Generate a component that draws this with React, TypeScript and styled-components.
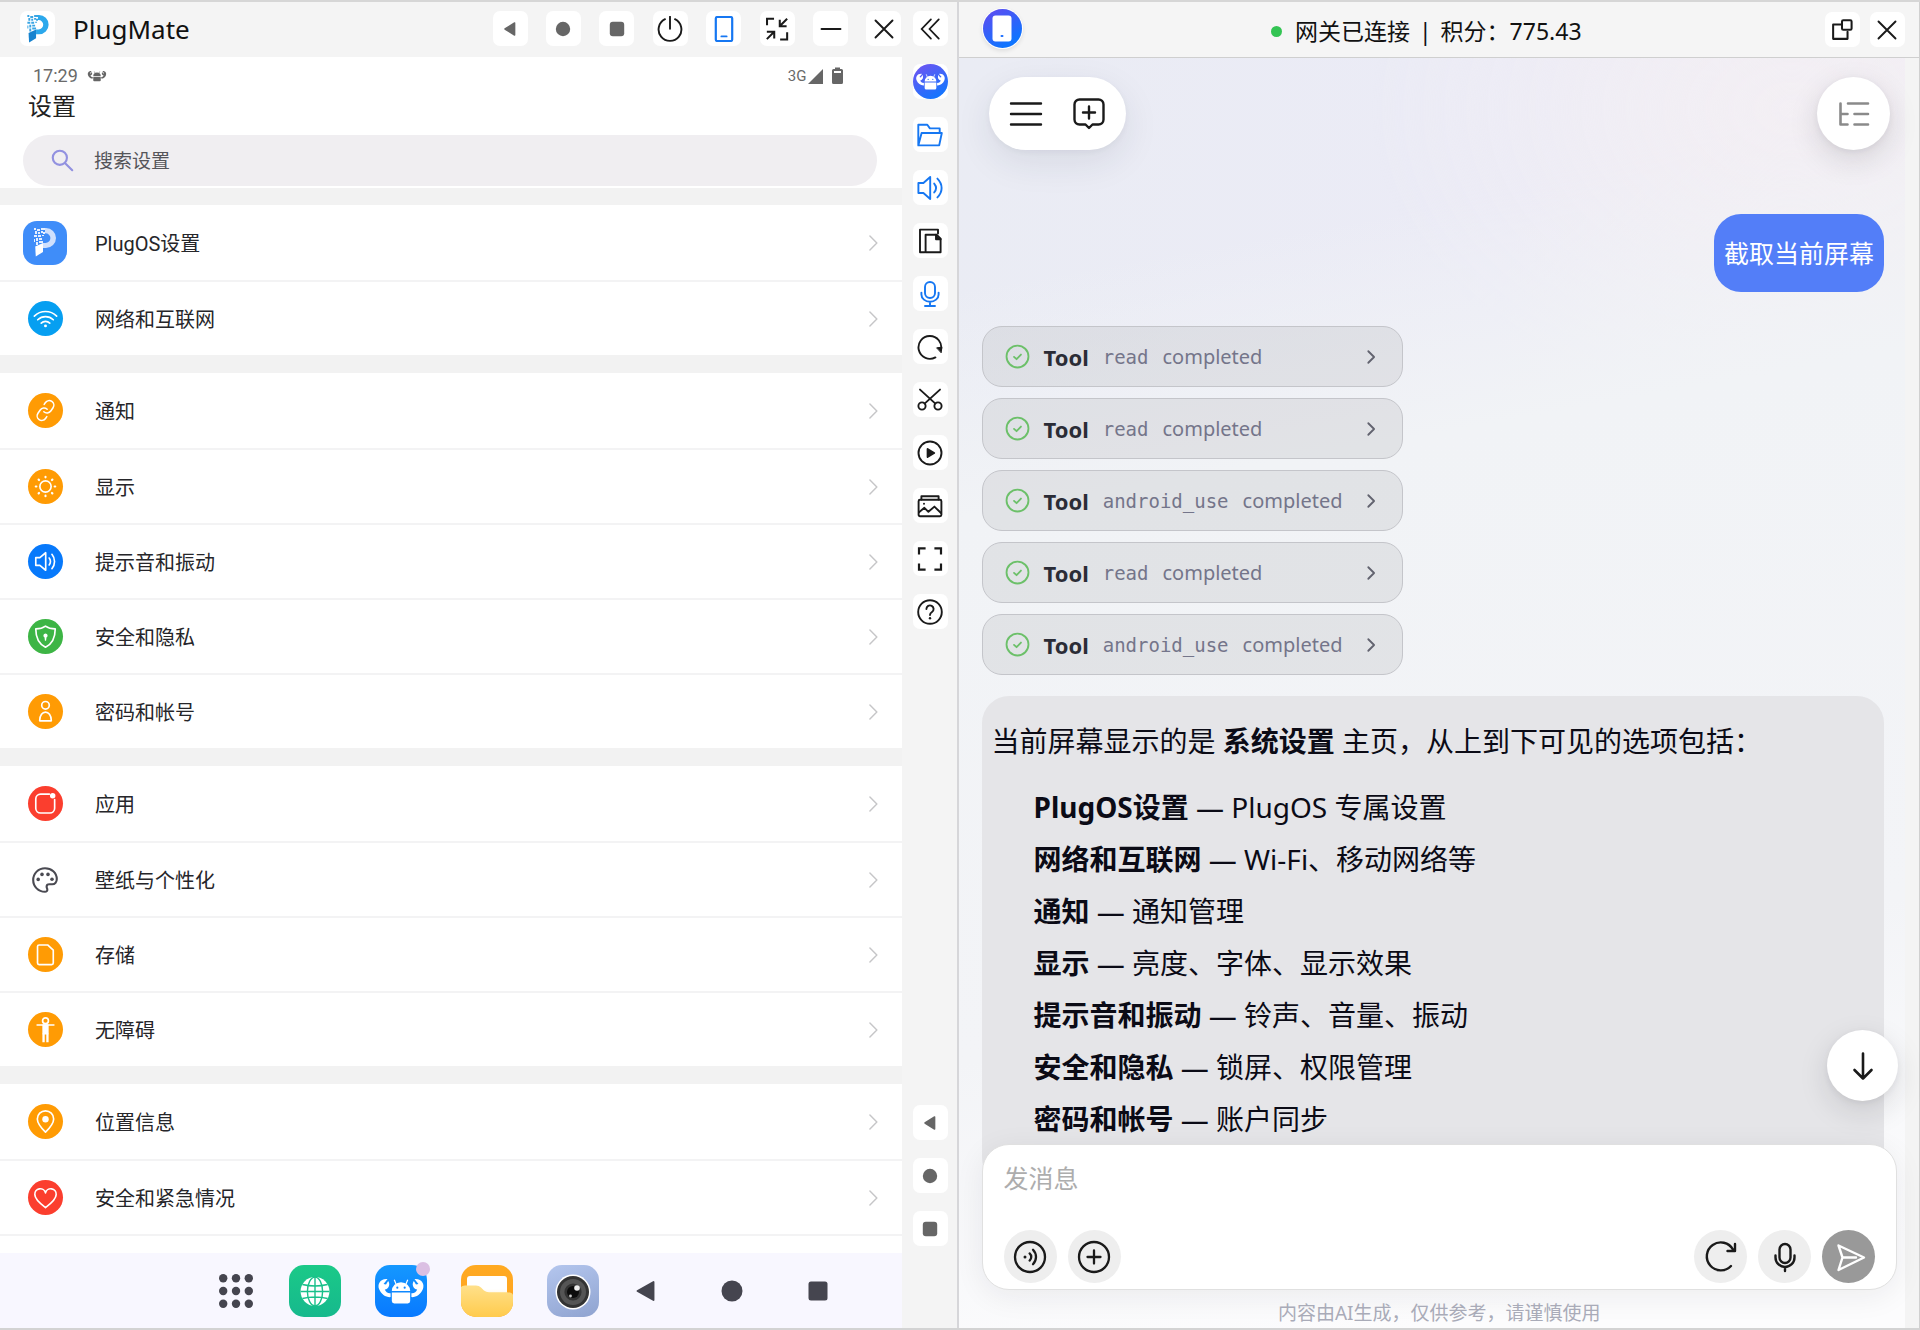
import React from "react";
import styled, { createGlobalStyle } from "styled-components";

const cjk = `"Noto Sans CJK SC", sans-serif`;
const desktopFont = `"Noto Sans", ${cjk}`;
const phoneFont = `Roboto, ${cjk}`;

const blue = "#1677f2";
const ink = "#1a1a1a";

const GlobalStyle = createGlobalStyle`
  *, *::before, *::after { box-sizing: border-box; }
  body { margin: 0; font-family: ${desktopFont}; color: ${ink}; background: #f4f4f4; }
  button, input, textarea { font: inherit; color: inherit; border: 0; margin: 0; padding: 0; background: none; }
  h1, p, ul { margin: 0; padding: 0; font-weight: 400; }
  ul { list-style: none; }
  svg { display: block; flex: none; }
`;

/* ---------- glyphs ---------- */

type GlyphProps = { size?: number; color?: string; children: React.ReactNode; box?: number; weight?: number };

const Glyph = ({ size = 26, color = ink, box = 26, weight = 1.9, children }: GlyphProps) => (
  <svg width={size} height={size} viewBox={`0 0 ${box} ${box}`} fill="none" stroke={color}
    strokeWidth={weight} strokeLinecap="round" strokeLinejoin="round" aria-hidden="true">
    {children}
  </svg>
);

const claw = "M9.2 10.2C4.6 9.6 2.2 13.6 3.8 17C5 20 8 22.2 11.2 22V19.4C9.4 19.6 8 18.6 7.4 17C10 16.6 11.2 13.6 9.6 11.4L8.2 13.8L6.6 13.4Z";

const Lobster = ({ fill = "#fff", eye = "#2a6cf8" }: { fill?: string; eye?: string }) => (
  <g stroke="none" fill={fill}>
    <path d="M12 18a6 5.8 0 0 1 12 0z" />
    <path d="M12 19h12v5.6a1.6 1.6 0 0 1-1.6 1.6h-8.800a1.600 1.600 0 0 1-1.600-1.600z" />
    <path d="M14.800 13.600L13.600 10.600M21.200 13.600L22.400 10.600" stroke={fill} strokeWidth="0.800" />
    <path d={claw} />
    <path d={claw} transform="translate(36 0) scale(-1 1)" />
    <circle cx="15.600" cy="15.800" r="0.700" fill={eye} />
    <circle cx="20.400" cy="15.800" r="0.700" fill={eye} />
  </g>
);

const PMark = ({ bowl, stem, dots }: { bowl: string; stem: string; dots: string }) => (
  <g stroke="none">
    <path d="M11 0h1a10 10 0 0 1 0 20H9v-5h2.500a4.900 4.900 0 0 0 0-9.800H11z" fill={bowl} />
    <path d="M1.200 18.600L9 15v9L1.800 28.400z" fill={stem} />
    <path d="M0 0h2v2H0zM3 1h3v2H3zM7 0h4v2H7zM1 3h2v3H1zM4 4h2v2H4zM7 3h2v2H7zM9 4h2v2H9zM0 7h3v2H0zM4 7h3v2H4zM8 7h2v1H8zM2 10h2v3H2zM5 10h3v2H5zM0 11h1v3H0zM5 13h2v2H5zM2 14h2v3H2zM7 13h2v2H7z" fill={dots} />
  </g>
);

const shapes = {
  back: <path d="M17.600 7v12L8 13z" fill="#666" stroke="#666" strokeWidth="1.500" />,
  home: <circle cx="13" cy="13" r="7.200" fill="#666" stroke="none" />,
  recent: <rect x="5.800" y="5.800" width="14.400" height="14.400" rx="3" fill="#666" stroke="none" />,
  power: <><path d="M8 3.200a11.400 11.400 0 1 0 10 0" /><path d="M13 .8v12" /></>,
  phone: <><rect x="4.800" y="1" width="16.400" height="24" rx="1.600" strokeWidth="2.200" /><path d="M10.400 20.400h5.200" /></>,
  shrink: <path d="M2.200 9V2h7.600M16 3v7h7.400M24 1.800l-7.600 7.600M2 16h8v7.400M9.400 16.600L2 24M16.400 24.400h7.600v-7.800" strokeLinecap="butt" strokeLinejoin="miter" strokeWidth="2.200" />,
  minus: <path d="M3.500 13h19" />,
  close: <path d="M4.500 4.500l17 17M21.500 4.500l-17 17" />,
  fold: <path d="M14 2.500L4 13l10 10.500M22.500 2.500L12.500 13l10 10.500" strokeLinejoin="miter" />,
  folder: <path d="M1.300 23V2.800h9l2.600 3.600h9.800v4.200M1.300 23.400L4.600 11h20.200l-2.600 12.400z" />,
  volume: <path d="M1.400 8h5l6.800-6v22l-6.800-6h-5zM17.200 8.600c2.200 2.600 2.200 6.200 0 8.800M20.400 3.600c5.600 5.600 5.600 13.200 0 18.800" />,
  copy: <><path d="M7.600 24.200H3V1.600h18v4" /><path d="M8.600 6.800h11.200l3.800 3.800v13.600h-15z" /><path d="M19 6.800v4.400h4.600" fill={ink} /></>,
  mic: <><rect x="8" y="1" width="10" height="16" rx="5" /><path d="M4.400 11.600v1.800a8.600 7.400 0 0 0 17.200 0v-1.800M13 21v4M8 25h10" /></>,
  rotate: <><path d="M18.400 23.400A11.400 11.400 0 1 1 24 16" /><path d="M20 13.800l4.800-.6-.6 5.200z" fill={ink} strokeWidth="1" /></>,
  cut: <><circle cx="5" cy="19" r="3.600" /><circle cx="21" cy="19" r="3.600" /><path d="M3 2.600L18.400 16.600M23 2.600L7.600 16.600" /></>,
  play: <><circle cx="13" cy="13" r="11.500" /><path d="M10.600 9l6.600 4-6.600 4z" fill={ink} /></>,
  gallery: <><path d="M4.400 6.600v-3.400h17.200v3.400" /><rect x="1.600" y="6.800" width="22.800" height="16.400" rx="1.400" /><path d="M2 19.200l5.400-4.400 4 4 6-5.200 6.600 6.400" /><circle cx="7" cy="10.800" r="1" fill={ink} stroke="none" /></>,
  full: <path d="M2 8.600V2.400h6.600M17.400 2.400H24v6.200M24 17.400v6.200h-6.600M8.600 23.600H2v-6.200" strokeLinecap="butt" strokeLinejoin="miter" strokeWidth="2.200" />,
  help: <><circle cx="13" cy="13" r="11.800" /><path d="M9.400 10a3.600 3.600 0 1 1 5.600 3c-1.400.9-2 1.500-2 3" /><circle cx="13" cy="19.200" r="1.200" fill={ink} stroke="none" /></>,
  popout: <><path d="M11.600 7H3.400v15.600H19V15" strokeWidth="2.200" /><rect x="13" y="2.400" width="10.400" height="10.400" rx="1.400" strokeWidth="2.200" /></>,
};
type ShapeName = keyof typeof shapes;

const chevron = <path d="M9 4l9 9-9 9" />;

/* ---------- frame ---------- */

const Desktop = styled.main`
  display: flex;
  height: 100vh;
  border-top: 2px solid #d6d6d6;
  border-bottom: 2px solid #d3d3d3;
`;

const PhoneWindow = styled.section`
  flex: 958 1 0;
  min-width: 0;
  display: grid;
  grid-template-columns: 1fr 55px;
  border-right: 1px solid #d6d6d9;
`;

const PhoneColumn = styled.div`
  min-width: 0;
  min-height: 0;
  display: flex;
  flex-direction: column;
`;

const TitleBar = styled.header`
  flex: none;
  height: 55px;
  display: flex;
  align-items: center;
  padding: 0 0 2px 20px;
`;

const AppName = styled.h1`
  margin-left: 18px;
  font-size: 26px;
  line-height: 34px;
  color: #111;
`;

const WindowTools = styled.div`
  width: 409px;
  margin-left: auto;
  display: flex;
  justify-content: space-between;
`;

const Tile = styled.button`
  flex: none;
  width: 35px;
  height: 35px;
  display: grid;
  place-items: center;
  border-radius: 7px;
  background: #fff;
`;

const SideBar = styled.nav`
  display: flex;
  flex-direction: column;
  align-items: center;
  gap: 18px;
  padding: 9px 0 82px 2px;
`;

const Spacer = styled.span`
  flex: 1;
`;

const ToolTile = ({ icon, label, active, size = 26 }: { icon: ShapeName; label: string; active?: boolean; size?: number }) => (
  <Tile type="button" aria-label={label}>
    <Glyph size={size} color={active ? blue : ink}>{shapes[icon]}</Glyph>
  </Tile>
);

/* ---------- phone screen ---------- */

const Screen = styled.div`
  flex: 1;
  min-height: 0;
  display: flex;
  flex-direction: column;
  background: #fff;
  font-family: ${phoneFont};
`;

const StatusBar = styled.div`
  display: flex;
  align-items: center;
  gap: 9px;
  height: 36px;
  padding: 2px 59px 0 33px;
  font-size: 18px;
  line-height: 22px;
  color: #6a6a6a;
`;

const Signal = styled.span`
  margin-left: auto;
  display: flex;
  align-items: center;
  font-size: 15px;
`;

const PageTitle = styled.h1`
  padding-left: 28px;
  font-size: 24px;
  line-height: 28px;
  color: #222;
`;

const SearchBox = styled.label`
  flex: none;
  height: 51px;
  margin: 14px 25px 2px 23px;
  padding: 0 28px;
  display: flex;
  align-items: center;
  gap: 20px;
  border-radius: 26px;
  background: #f0eef1;
`;

const SearchInput = styled.input`
  flex: 1;
  padding-top: 3px;
  font-size: 19px;
  line-height: 28px;
  outline: 0;
  &::placeholder { color: #55555a; opacity: 1; }
`;

const Groups = styled.div`
  flex: 1;
  min-height: 0;
  overflow: hidden;
  display: flex;
  flex-direction: column;
  gap: 18px;
  padding-top: 17px;
  background: #f2f2f2;
`;

const Group = styled.ul`
  flex: none;
  background: #fff;
  &:last-child { flex: 1 0 auto; }
`;

const Item = styled.li`
  height: 75px;
  & + & { border-top: 2px solid #f3f3f4; }
  ${Group}:last-child &:last-child { height: 77px; border-bottom: 2px solid #f3f3f4; }
`;

const Row = styled.button`
  width: 100%;
  height: 100%;
  padding: 0 19px 0 23px;
  display: grid;
  grid-template-columns: 44px 1fr auto;
  align-items: center;
  column-gap: 28px;
  text-align: left;
  font-size: 20px;
  line-height: 28px;
  color: #26262a;
`;

const RowLabel = styled.span`
  padding-top: 2px;
`;

const Badge = styled.span<{ $color: string }>`
  justify-self: center;
  width: 35px;
  height: 35px;
  display: grid;
  place-items: center;
  border-radius: 50%;
  background: ${(p) => p.$color};
`;

const SquareBadge = styled(Badge)`
  width: 44px;
  height: 44px;
  border-radius: 14px;
`;

const orange = "#ff9b04";
const red = "#fb3e2e";

const badges: Record<string, [string, React.ReactNode]> = {
  wifi: ["#069ff1", <><path d="M6.500 15.500a16.500 16.500 0 0 1 23 0M10 19.300a11.500 11.500 0 0 1 16 0M13.600 22.800a6.300 6.300 0 0 1 8.800 0" /><circle cx="18" cy="25.600" r="1.500" fill="#fff" stroke="none" /></>],
  link: [orange, <g transform="rotate(-10 18 18) translate(6.600 6.600) scale(.95)"><path d="M10 13a5 5 0 0 0 7.540.540l3-3a5 5 0 0 0-7.070-7.070l-1.720 1.710" /><path d="M14 11a5 5 0 0 0-7.540-.540l-3 3a5 5 0 0 0 7.070 7.070l1.710-1.710" /></g>],
  sun: [orange, <><circle cx="18" cy="18" r="5.800" />{[0, 45, 90, 135, 180, 225, 270, 315].map((a) => <path key={a} d="M18 8.600v-.6" strokeWidth="2.200" transform={`rotate(${a} 18 18)`} />)}</>],
  sound: ["#0779fb", <path d="M8 14h4.200l6-5v18l-6-5H8zM21.800 14.400c1.600 2.200 1.600 5 0 7.200M24.600 10.600c3.600 4.400 3.600 10.400 0 14.800" />],
  shield: ["#3db545", <><path d="M18 7.400c3 2.200 6.600 2.800 10 2.800 0 8-2.400 15-10 18.800C10.400 25.200 8 18.200 8 10.200c3.400 0 7-.6 10-2.800z" /><path d="M18 14.800a2.300 2.300 0 0 1 1 4.300l-.4 3.300h-1.200l-.4-3.300a2.300 2.300 0 0 1 1-4.300z" fill="#fff" stroke="none" /></>],
  person: [orange, <><circle cx="18" cy="11.600" r="3.900" /><path d="M12 27.600c0-12 12-12 12 0z" /></>],
  apps: [red, <><path d="M22 8.400H13a5 5 0 0 0-5 5v9.400a5 5 0 0 0 5 5h9.400a5 5 0 0 0 5-5V14" /><circle cx="25.400" cy="10" r="2.800" fill="#fff" stroke="none" /></>],
  storage: [orange, <path d="M11.400 8.200h8.800l5.800 5.400v13.200a1.600 1.600 0 0 1-1.600 1.600h-13a1.600 1.600 0 0 1-1.600-1.600v-17a1.600 1.600 0 0 1 1.600-1.600z" />],
  access: [orange, <><circle cx="18" cy="9" r="3" /><path d="M9.400 13.400h17.200" /><path d="M15.600 13.400h4.800v9h-4.800z" fill="#fff" /><path d="M16 22v9M20 22v9" strokeWidth="2.400" strokeLinecap="butt" /></>],
  pin: [orange, <><path d="M18 29c-5-5-8.400-9.400-8.400-13.600a8.400 8.400 0 0 1 16.800 0c0 4.200-3.400 8.600-8.400 13.600z" /><circle cx="18" cy="15.600" r="3.300" fill="#fff" stroke="none" /></>],
  heart: [red, <path d="M18 28.400C12 24 7 19.800 7 15a5.600 5.600 0 0 1 11-1.800A5.600 5.600 0 0 1 29 15c0 4.800-5 9-11 13.400z" />],
};

const RowBadge = ({ name }: { name: string }) => {
  if (name === "plug")
    return (
      <SquareBadge $color="#3f8df9">
        <svg width="22" height="29" viewBox="0 0 22 29" aria-hidden="true"><PMark bowl="#cfe0fd" stem="#fff" dots="#e6f0ff" /></svg>
      </SquareBadge>
    );
  if (name === "palette")
    return (
      <Badge $color="transparent">
        <Glyph size={26} color="#4a4a52" weight={2.100}>
          <path d="M13 1.200C6.400 1.200 1.200 6.400 1.200 13S6.400 24.800 13 24.800c1.600 0 2.500-1.100 2.300-2.500-.2-1-.7-1.700-.7-2.600 0-1.600 1.200-2.400 2.800-2.400h2.800c2.800 0 4.600-2.200 4.600-5.200C24.800 5.600 19.400 1.200 13 1.200z" />
          {[[6.2, 12.4], [10, 7.4], [16, 7.4], [20, 12.2]].map(([x, y]) => <circle key={x} cx={x} cy={y} r="1.800" fill="#4a4a52" stroke="none" />)}
        </Glyph>
      </Badge>
    );
  const [color, art] = badges[name];
  return <Badge $color={color}><Glyph size={35} box={36} color="#fff" weight={1.700}>{art}</Glyph></Badge>;
};

const settings: [string, string][][] = [
  [["plug", "PlugOS设置"], ["wifi", "网络和互联网"]],
  [["link", "通知"], ["sun", "显示"], ["sound", "提示音和振动"], ["shield", "安全和隐私"], ["person", "密码和帐号"]],
  [["apps", "应用"], ["palette", "壁纸与个性化"], ["storage", "存储"], ["access", "无障碍"]],
  [["pin", "位置信息"], ["heart", "安全和紧急情况"]],
];

const Dock = styled.nav`
  flex: none;
  height: 75px;
  display: flex;
  align-items: center;
  justify-content: center;
  gap: 34px;
  padding-left: 146px;
  background: #f8f7ff;
`;

const DockButton = styled.button<{ $fill?: string }>`
  position: relative;
  height: 52px;
  display: grid;
  place-items: center;
  border-radius: 15px;
  background: ${(p) => p.$fill ?? "none"};
`;

const AppDrawerButton = styled(DockButton)`
  width: 38px;
`;

const UnreadDot = styled.span`
  position: absolute;
  top: -3px;
  right: -3px;
  width: 14px;
  height: 14px;
  border-radius: 50%;
  background: #dbbfe3;
`;

const NavKeys = styled.div`
  display: flex;
  gap: 60px;
`;

const dark = "#45454f";

const PhoneDock = () => (
  <Dock aria-label="导航栏">
    <AppDrawerButton type="button" aria-label="全部应用">
      <svg width="34" height="34" viewBox="0 0 34 34" fill={dark} aria-hidden="true">
        {[4.2, 17, 29.8].map((y) => [4.2, 17, 29.8].map((x) => <circle key={`${x}-${y}`} cx={x} cy={y} r="4.200" />))}
      </svg>
    </AppDrawerButton>
    <DockButton type="button" aria-label="浏览器" $fill="linear-gradient(#1bc988, #16b98d)">
      <svg width="52" height="52" viewBox="0 0 52 52" aria-hidden="true">
        <circle cx="26" cy="26.500" r="14.400" fill="#fff" />
        <g fill="none" stroke="#19c08a" strokeWidth="1.400">
          <ellipse cx="26" cy="26.500" rx="7.600" ry="14.400" />
          <path d="M26 12v29M11.600 26.500h28.800M13.400 19.500q12.600 3 25.200 0M13.400 33.500q12.600-3 25.200 0" />
        </g>
      </svg>
    </DockButton>
    <DockButton type="button" aria-label="助手" $fill="linear-gradient(#1598ff, #0879ff)">
      <svg width="52" height="52" viewBox="1 1 34 34" aria-hidden="true"><Lobster eye="#0f86ff" /></svg>
      <UnreadDot />
    </DockButton>
    <DockButton type="button" aria-label="文件" $fill="linear-gradient(#ffaa22, #ffa220)">
      <svg width="52" height="52" viewBox="0 0 52 52" aria-hidden="true">
        <defs>
          <linearGradient id="folderPaper" x1="0" y1="0" x2="0" y2="1"><stop offset="0.500" stopColor="#fff" /><stop offset="1" stopColor="#ffe9bd" /></linearGradient>
          <linearGradient id="folderFront" x1="0" y1="0" x2="0" y2="1"><stop offset="0" stopColor="#ffe08a" /><stop offset="1" stopColor="#ffcb4d" /></linearGradient>
        </defs>
        <rect x="6" y="11" width="40" height="26" rx="3" fill="url(#folderPaper)" />
        <path d="M0 22q1-1.500 4-1.500h11q3 0 5 2l3 3q2 1.800 5 1.800h18q5 0 6 2.700v7A15 15 0 0 1 37 52H15A15 15 0 0 1 0 37z" fill="url(#folderFront)" />
      </svg>
    </DockButton>
    <DockButton type="button" aria-label="相机" $fill="linear-gradient(160deg, #b4c6ee, #8fa3d0)">
      <svg width="52" height="52" viewBox="0 0 52 52" aria-hidden="true">
        <circle cx="26" cy="27" r="17.500" fill="#fff" />
        <circle cx="26" cy="27" r="16" fill="#333" />
        <circle cx="26" cy="27" r="13" fill="#555" />
        <circle cx="26" cy="27" r="8.600" fill="#333" />
        <circle cx="26" cy="27" r="6" fill="#0c0c0c" />
        <circle cx="30" cy="23" r="2.800" fill="#eee" />
        <circle cx="23.500" cy="31" r="1.400" fill="#ccc" />
      </svg>
    </DockButton>
    <NavKeys>
      <DockButton type="button" aria-label="返回">
        <Glyph size={26} color={dark}><path d="M20.500 4v18L4.500 13z" fill={dark} /></Glyph>
      </DockButton>
      <DockButton type="button" aria-label="主页">
        <Glyph size={26}><circle cx="13" cy="13" r="10.500" fill={dark} stroke="none" /></Glyph>
      </DockButton>
      <DockButton type="button" aria-label="最近任务">
        <Glyph size={26}><rect x="3.500" y="3.500" width="19" height="19" rx="2.500" fill={dark} stroke="none" /></Glyph>
      </DockButton>
    </NavKeys>
  </Dock>
);

const PhonePanel = () => (
  <PhoneWindow aria-label="PlugMate">
    <PhoneColumn>
      <TitleBar>
        <Tile as="span">
          <svg width="22" height="28" viewBox="0 0 22 29" aria-hidden="true"><PMark bowl="#2ba8ec" stem="#1783cf" dots="#39a5e4" /></svg>
        </Tile>
        <AppName>PlugMate</AppName>
        <WindowTools>
          <ToolTile icon="back" label="返回" />
          <ToolTile icon="home" label="主页" />
          <ToolTile icon="recent" label="最近" />
          <ToolTile icon="power" label="电源" />
          <ToolTile icon="phone" label="竖屏" active />
          <ToolTile icon="shrink" label="还原" size={24} />
          <ToolTile icon="minus" label="最小化" />
          <ToolTile icon="close" label="关闭" />
        </WindowTools>
      </TitleBar>
      <Screen>
        <StatusBar>
          <span>17:29</span>
          <svg width="20" height="20" viewBox="2 2 32 32" aria-hidden="true"><Lobster fill="#666" eye="#666" /></svg>
          <Signal>
            3G
            <svg width="25" height="18" viewBox="0 0 25 18" aria-hidden="true"><path d="M1 17L16 2v15z" fill="#666" /></svg>
            <svg width="11" height="18" viewBox="0 0 11 18" aria-hidden="true"><path d="M3 2V.5h5V2h1.500A1.500 1.500 0 0 1 11 3.500v12a1.500 1.500 0 0 1-1.500 1.500h-8A1.500 1.500 0 0 1 0 15.500v-12A1.500 1.500 0 0 1 1.500 2zM2 4v2h7V4z" fill="#666" fillRule="evenodd" /></svg>
          </Signal>
        </StatusBar>
        <PageTitle>设置</PageTitle>
        <SearchBox>
          <Glyph size={23} color="#9291e0" weight={2.400}><circle cx="10" cy="10" r="8" /><path d="M16 16l8 8" /></Glyph>
          <SearchInput type="text" placeholder="搜索设置" aria-label="搜索设置" />
        </SearchBox>
        <Groups>
          {settings.map((group, g) => (
            <Group key={g}>
              {group.map(([icon, label]) => (
                <Item key={label}>
                  <Row type="button">
                    <RowBadge name={icon} />
                    <RowLabel>{label}</RowLabel>
                    <Glyph size={20} color="#c6c6c8" weight={1.900}>{chevron}</Glyph>
                  </Row>
                </Item>
              ))}
            </Group>
          ))}
        </Groups>
        <PhoneDock />
      </Screen>
    </PhoneColumn>
    <SideBar aria-label="工具">
      <ToolTile icon="fold" label="收起" size={24} />
      <Tile type="button" aria-label="助手">
        <svg width="35" height="35" viewBox="0 0 36 36" aria-hidden="true">
          <defs><linearGradient id="agent" x1="0.200" y1="0" x2="0.800" y2="1"><stop offset="0" stopColor="#6d55f2" /><stop offset="1" stopColor="#0c78ff" /></linearGradient></defs>
          <circle cx="18" cy="18" r="18" fill="url(#agent)" />
          <Lobster />
        </svg>
      </Tile>
      <ToolTile icon="folder" label="文件" active />
      <ToolTile icon="volume" label="声音" active />
      <ToolTile icon="copy" label="剪贴板" />
      <ToolTile icon="mic" label="麦克风" active />
      <ToolTile icon="rotate" label="旋转" />
      <ToolTile icon="cut" label="截图" />
      <ToolTile icon="play" label="录屏" />
      <ToolTile icon="gallery" label="相册" />
      <ToolTile icon="full" label="全屏" />
      <ToolTile icon="help" label="帮助" />
      <Spacer />
      <ToolTile icon="back" label="返回" />
      <ToolTile icon="home" label="主页" />
      <ToolTile icon="recent" label="最近" />
    </SideBar>
  </PhoneWindow>
);

/* ---------- chat ---------- */

const ChatWindow = styled.section`
  flex: 962 1 0;
  min-width: 0;
  display: flex;
  flex-direction: column;
  border-left: 1px solid #d6d6d9;
  border-right: 1px solid #d0d0d0;
`;

const ChatBar = styled.header`
  flex: none;
  height: 56px;
  display: flex;
  justify-content: space-between;
  align-items: center;
  padding: 0 14px 0 24px;
  border-bottom: 1px solid #cfcfcf;
  background: #f5f5f5;
`;

const ChatLogo = styled.span`
  width: 39px;
  height: 39px;
  margin-bottom: 3px;
  display: grid;
  place-items: center;
  border-radius: 50%;
  background: linear-gradient(150deg, #6548f0, #0f74ff 80%);
  box-shadow: 0 0 0 1px #fff, 0 2px 4px 1px #00000018;
`;

const ConnectionState = styled.p`
  display: flex;
  align-items: center;
  gap: 9px;
  padding: 3px 0 0 6px;
  font-size: 23px;
  line-height: 34px;
  color: #111;
`;

const OnlineDot = styled.i`
  width: 11px;
  height: 11px;
  margin-right: 4px;
  border-radius: 50%;
  background: #33c453;
`;

const BarActions = styled.div`
  display: flex;
  justify-content: flex-end;
  gap: 10px;
`;

const ChatBody = styled.div`
  position: relative;
  flex: 1;
  min-height: 0;
  margin-right: 14px;
  display: flex;
  flex-direction: column;
  background:
    radial-gradient(ellipse 420px 300px at 88% 4%, #f3eff4 0%, #f3eff400 100%),
    linear-gradient(100deg, #eaecf4 0%, #ebebf6 50%, #f1eff4 80%);
  &::before {
    content: "";
    position: absolute;
    inset: 0;
    background: linear-gradient(170deg, #f1f3f600 16%, #f1f3f6 32%, #f3f4f7 70%, #fcfcfd 94%);
  }
  & > * { position: relative; }
`;

const FloatBar = styled.div`
  flex: none;
  display: flex;
  justify-content: space-between;
  padding: 19px 15px 0 30px;
`;

const FloatPill = styled.div`
  height: 73px;
  padding: 0 20px;
  display: flex;
  align-items: center;
  gap: 29px;
  border-radius: 37px;
  background: #fff;
  box-shadow: 0 12px 36px #20284018, 0 2px 6px #2028400c;
`;

const IconButton = styled.button`
  display: grid;
  place-items: center;
`;

const Round = styled.button<{ $size: number; $tone?: string; $lifted?: boolean }>`
  flex: none;
  width: ${(p) => p.$size}px;
  height: ${(p) => p.$size}px;
  display: grid;
  place-items: center;
  border-radius: 50%;
  background: ${(p) => p.$tone ?? "#fff"};
  box-shadow: ${(p) => (p.$lifted ? "0 10px 30px #20202822, 0 2px 6px #20202810" : "none")};
`;

const Messages = styled.div`
  flex: 1;
  min-height: 0;
  overflow: hidden;
  display: flex;
  flex-direction: column;
  padding: 64px 21px 0 23px;
`;

const UserBubble = styled.p`
  flex: none;
  align-self: flex-end;
  padding: 20px 10px;
  border-radius: 27px;
  background: #537ef8;
  color: #fff;
  font-size: 25px;
  line-height: 38px;
`;

const ToolCalls = styled.div`
  flex: none;
  align-self: flex-start;
  min-width: 421px;
  display: grid;
  gap: 11px;
  padding: 34px 0 21px;
`;

const ToolCard = styled.button`
  height: 61px;
  padding: 0 21px 0 22px;
  display: flex;
  align-items: center;
  gap: 14px;
  border: 1px solid #c4c5ca;
  border-radius: 20px;
  background: #00000010;
  font-size: 20px;
  line-height: 28px;
  color: #74758a;
  & svg:last-child { margin-left: auto; }
  & strong { font-size: 22px; color: #2b2c36; }
  & code { font-family: "DejaVu Sans Mono", monospace; font-size: 19px; }
`;

const Answer = styled.div`
  flex: none;
  padding: 19px 10px 40px;
  border-radius: 27px;
  background: #e5e5e8;
  font-size: 28px;
  line-height: 52px;
  color: #0b0b16;
  & strong { font-weight: 700; }
  & ul { padding: 14px 0 0 42px; }
`;

const Footer = styled.footer`
  flex: none;
  margin-top: -27px;
  padding: 0 8px 0 23px;
  text-align: center;
`;

const Composer = styled.form`
  height: 146px;
  padding: 15px 21px 6px;
  display: flex;
  flex-direction: column;
  border: 1px solid #e0e0e0;
  border-radius: 27px;
  background: #fff;
  box-shadow: 0 6px 30px #20202812;
`;

const MessageInput = styled.textarea`
  flex: 1;
  width: 100%;
  resize: none;
  outline: 0;
  font-size: 25px;
  line-height: 36px;
  &::placeholder { color: #adadad; opacity: 1; }
`;

const ComposerTools = styled.div`
  display: flex;
  gap: 11px;
`;

const Disclaimer = styled.p`
  padding-top: 8px;
  font-size: 19px;
  line-height: 30px;
  color: #a9abb8;
`;

const ScrollDown = styled(Round)`
  position: absolute !important;
  right: 7px;
  bottom: 227px;
`;

const calls = ["read", "read", "android_use", "read", "android_use"];

const options: [string, string][] = [
  ["PlugOS设置", "PlugOS 专属设置"],
  ["网络和互联网", "Wi-Fi、移动网络等"],
  ["通知", "通知管理"],
  ["显示", "亮度、字体、显示效果"],
  ["提示音和振动", "铃声、音量、振动"],
  ["安全和隐私", "锁屏、权限管理"],
  ["密码和帐号", "账户同步"],
];

const ChatPanel = () => (
  <ChatWindow aria-label="对话">
    <ChatBar>
      <ChatLogo>
        <svg width="20" height="27" viewBox="0 0 20 27" aria-hidden="true">
          <rect x="0.500" y="0.500" width="19" height="26" rx="3" fill="#fff" />
          <rect x="8.500" y="20" width="3" height="2" rx="1" fill="#1e70ff" />
        </svg>
      </ChatLogo>
      <ConnectionState>
        <OnlineDot />
        <span>网关已连接</span>
        <span>|</span>
        <span>积分：775.43</span>
      </ConnectionState>
      <BarActions>
        <ToolTile icon="popout" label="弹出" size={24} />
        <ToolTile icon="close" label="关闭" />
      </BarActions>
    </ChatBar>
    <ChatBody>
      <FloatBar>
        <FloatPill>
          <IconButton type="button" aria-label="菜单">
            <Glyph size={34} box={34} weight={2.400}><path d="M2 6.500h30M2 17h30M2 27.500h30" /></Glyph>
          </IconButton>
          <IconButton type="button" aria-label="新对话">
            <Glyph size={34} box={34} weight={2.400}>
              <path d="M7.500 2.500h19a5 5 0 0 1 5 5v15a5 5 0 0 1-5 5h-6L17 31l-3.500-3.500h-6a5 5 0 0 1-5-5v-15a5 5 0 0 1 5-5zM17 9.500v12M11 15.500h12" />
            </Glyph>
          </IconButton>
        </FloatPill>
        <Round type="button" aria-label="目录" $size={73} $lifted>
          <Glyph size={34} box={34} color="#8a8a8a" weight={2.600}>
            <path d="M3.500 6.500v21h7M3.500 17h7M11 6.500h20M17.500 17H31M17.500 27.500H31" />
          </Glyph>
        </Round>
      </FloatBar>
      <Messages>
        <UserBubble>截取当前屏幕</UserBubble>
        <ToolCalls>
          {calls.map((name, i) => (
            <ToolCard type="button" key={i}>
              <Glyph size={25} color="#6cc069" weight={1.900}><circle cx="13" cy="13" r="11.400" /><path d="M9.400 13.400l2.600 2.400 4.600-4.800" /></Glyph>
              <strong>Tool</strong>
              <code>{name}</code>
              <span>completed</span>
              <Glyph size={20} color="#62636f" weight={2.400}><path d="M9.500 5.500L17 13l-7.500 7.500" /></Glyph>
            </ToolCard>
          ))}
        </ToolCalls>
        <Answer>
          <p>当前屏幕显示的是 <strong>系统设置</strong> 主页，从上到下可见的选项包括：</p>
          <ul>
            {options.map(([name, detail]) => <li key={name}><strong>{name}</strong> — {detail}</li>)}
          </ul>
        </Answer>
      </Messages>
      <Footer>
        <Composer>
          <MessageInput placeholder="发消息" aria-label="发消息" />
          <ComposerTools>
            <Round type="button" aria-label="语音通话" $size={53} $tone="#eeeeee">
              <Glyph size={34} box={34} weight={2.300}>
                <circle cx="17" cy="17" r="15" />
                <path d="M16.600 13.400c2.200 2 2.200 5.200 0 7.200M20 9.800c4 4.200 4 10.200 0 14.400" />
                <circle cx="12" cy="17" r="1.500" fill={ink} stroke="none" />
              </Glyph>
            </Round>
            <Round type="button" aria-label="添加" $size={53} $tone="#eeeeee">
              <Glyph size={34} box={34} weight={2.300}><circle cx="17" cy="17" r="15" /><path d="M17 10.500v13M10.500 17h13" /></Glyph>
            </Round>
            <Spacer />
            <Round type="button" aria-label="重新生成" $size={53} $tone="#eeeeee">
              <Glyph size={34} box={34} weight={2.400}><path d="M27 26a14 14 0 1 1 2-16.500M31 4v7h-7.500" /></Glyph>
            </Round>
            <Round type="button" aria-label="语音输入" $size={53} $tone="#eeeeee">
              <Glyph size={34} box={34} weight={2.400}><rect x="11.500" y="4" width="11" height="19" rx="5.500" /><path d="M7.500 15.500v2a9.500 9.500 0 0 0 19 0v-2M17 27v4" /></Glyph>
            </Round>
            <Round type="submit" aria-label="发送" $size={53} $tone="#999999">
              <Glyph size={34} box={34} color="#fff" weight={2.400}><path d="M6.500 5.500L32 17.500 6.500 30l4-12.500zM10.500 17.500H24" /></Glyph>
            </Round>
          </ComposerTools>
        </Composer>
        <Disclaimer>内容由AI生成，仅供参考，请谨慎使用</Disclaimer>
      </Footer>
      <ScrollDown type="button" aria-label="滚动到底部" $size={71} $lifted>
        <Glyph size={34} box={34} weight={2.600}><path d="M17 4.500v25M8.500 21l8.500 8.500 8.500-8.500" /></Glyph>
      </ScrollDown>
    </ChatBody>
  </ChatWindow>
);

export default function App() {
  return (
    <>
      <GlobalStyle />
      <Desktop>
        <PhonePanel />
        <ChatPanel />
      </Desktop>
    </>
  );
}
